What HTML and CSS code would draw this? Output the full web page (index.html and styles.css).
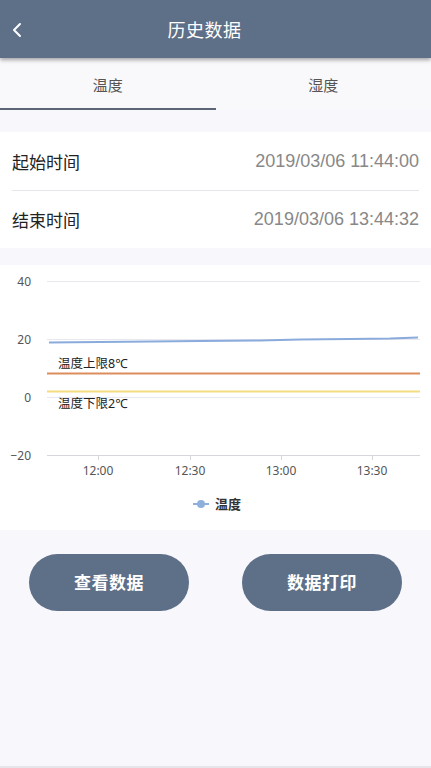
FILE: index.html
```html
<!DOCTYPE html>
<html lang="zh-CN">
<head>
  <meta charset="UTF-8" />
  <meta name="viewport" content="width=device-width, initial-scale=1.0" />
  <title>历史数据</title>
  <link rel="stylesheet" href="styles.css">
</head>
<body>
  <header class="topbar">
    <a href="#" class="back" aria-label="返回">
      <svg width="12" height="16" viewBox="0 0 12 16"><path d="M9 2 L3 8 L9 14" fill="none" stroke="#fff" stroke-width="2" stroke-linecap="round" stroke-linejoin="round"/></svg>
    </a>
    <h1>历史数据</h1>
  </header>

  <nav class="tabs">
    <a href="#" class="tab active">温度</a>
    <a href="#" class="tab">湿度</a>
  </nav>

  <section class="times">
    <div class="row">
      <span class="label">起始时间</span>
      <span class="value">2019/03/06 11:44:00</span>
    </div>
    <div class="row">
      <span class="label">结束时间</span>
      <span class="value">2019/03/06 13:44:32</span>
    </div>
  </section>

  <section class="chart">
    <svg width="431" height="265" viewBox="0 0 431 265">
      <!-- grid -->
      <g stroke="#e8e8ee" stroke-width="1">
        <line x1="47" y1="16.5" x2="420" y2="16.5"/>
        <line x1="47" y1="74.5" x2="420" y2="74.5"/>
        <line x1="47" y1="132.5" x2="420" y2="132.5"/>
      </g>
      <line x1="47" y1="190.5" x2="420" y2="190.5" stroke="#d6d6dc"/>
      <g stroke="#d6d6dc">
        <line x1="98.5" y1="190" x2="98.5" y2="195"/>
        <line x1="190.5" y1="190" x2="190.5" y2="195"/>
        <line x1="281.5" y1="190" x2="281.5" y2="195"/>
        <line x1="372.5" y1="190" x2="372.5" y2="195"/>
      </g>

      <g class="axis" text-anchor="end">
        <text x="31" y="21">40</text>
        <text x="31" y="79">20</text>
        <text x="31" y="137">0</text>
        <text x="31" y="195">−20</text>
      </g>
      <g class="axis" text-anchor="middle">
        <text x="98" y="210">12:00</text>
        <text x="190" y="210">12:30</text>
        <text x="281" y="210">13:00</text>
        <text x="372" y="210">13:30</text>
      </g>

      <!-- limits -->
      <line x1="47" y1="108.5" x2="420" y2="108.5" stroke="#dd8c5c" stroke-width="2"/>
      <line x1="47" y1="126.5" x2="420" y2="126.5" stroke="#f3dc82" stroke-width="2"/>
      <text class="mark" x="58" y="103">温度上限8℃</text>
      <text class="mark" x="58" y="143">温度下限2℃</text>

      <!-- data -->
      <polyline fill="none" stroke="#8aabdc" stroke-width="2"
        points="49,77.5 100,77 150,76.5 200,76 260,75.5 300,74.5 350,74 390,73.5 418,72.5"/>

      <!-- legend -->
      <line x1="193" y1="239" x2="209" y2="239" stroke="#8fb0dc" stroke-width="2"/>
      <circle cx="201" cy="239" r="4" fill="#8fb0dc"/>
      <text class="legend" x="215" y="244">温度</text>
    </svg>
  </section>

  <div class="actions">
    <button type="button">查看数据</button>
    <button type="button">数据打印</button>
  </div>

  <footer class="bottom"></footer>
</body>
</html>
```

FILE: styles.css
```css
* {
  box-sizing: border-box;
  margin: 0;
  padding: 0;
}

html, body {
  height: 100%;
}

body {
  font-family: "Noto Sans", "Noto Sans CJK SC", sans-serif;
  background-color: #f8f8fc;
  color: #222;
  display: flex;
  flex-direction: column;
}

.topbar {
  height: 58px;
  background-color: #5e6f88;
  box-shadow: 0 2px 4px rgba(0,0,0,0.35);
  display: flex;
  align-items: center;
  justify-content: center;
  position: relative;
  z-index: 2;
}

.topbar h1 {
  color: #fff;
  font-size: 18px;
  font-weight: 400;
  letter-spacing: 0.5px;
  margin-right: 22px;
}

.topbar .back {
  position: absolute;
  left: 11px;
  top: 22px;
  display: flex;
}

.tabs {
  display: flex;
  height: 52px;
  background-color: #f9f9fc;
}

.tab {
  flex: 1;
  display: flex;
  align-items: center;
  justify-content: center;
  text-decoration: none;
  color: #555;
  font-size: 15px;
  border-bottom: 2px solid transparent;
  padding-top: 2px;
}

.tab.active {
  border-bottom-color: #5c6677;
}

.times {
  margin-top: 22px;
  background-color: #fff;
  padding: 0 12px;
}

.row {
  height: 58px;
  display: flex;
  align-items: center;
  justify-content: space-between;
}

.row + .row {
  border-top: 1px solid #e6e6ea;
}

.row .label {
  font-size: 17px;
  color: #222;
}

.row .value {
  font-size: 18px;
  color: #888;
  font-family: "Liberation Sans", sans-serif;
}

.chart {
  margin-top: 17px;
  background-color: #fff;
  height: 265px;
}

.chart svg {
  display: block;
}

.axis {
  font-family: "Noto Sans", sans-serif;
  font-size: 12px;
  fill: #555;
}

.mark {
  font-size: 12.5px;
  fill: #222;
}

.legend {
  font-size: 13px;
  font-weight: 700;
  fill: #333;
}

.actions {
  display: flex;
  justify-content: space-between;
  padding: 24px 29px 0;
}

.actions button {
  width: 160px;
  height: 57px;
  border: none;
  border-radius: 29px;
  background-color: #5e6f88;
  color: #fff;
  font-family: "Noto Sans CJK SC", sans-serif;
  font-size: 17px;
  font-weight: 700;
  letter-spacing: 0.5px;
  padding-bottom: 2px;
  cursor: pointer;
}

.bottom {
  margin-top: auto;
  height: 2px;
  background-color: #e6e6ea;
}
```
